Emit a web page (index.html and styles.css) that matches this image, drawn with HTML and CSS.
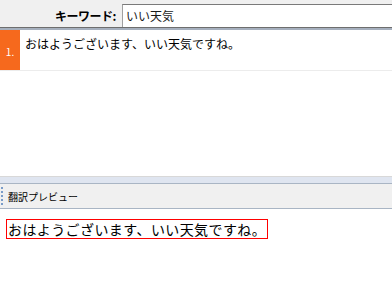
FILE: index.html
```html
<!DOCTYPE html>
<html lang="ja">
<head>
    <meta charset="UTF-8">
    <title>翻訳</title>
    <link rel="stylesheet" href="styles.css">
</head>
<body>
    <div class="topbar">
        <span class="kw-label">キーワード:</span>
        <div class="kw-input">いい天気</div>
    </div>
    <div class="sep"></div>

    <div class="list">
        <div class="row">
            <div class="num">1.</div>
            <div class="row-text">おはようございます、いい天気ですね。</div>
        </div>
    </div>

    <div class="splitter"></div>
    <div class="toolbar">
        <span class="grip"></span>
        <span class="toolbar-title">翻訳プレビュー</span>
    </div>

    <div class="preview">
        <div class="preview-box">おはようございます、いい天気ですね。</div>
    </div>
</body>
</html>
```

FILE: styles.css
```css
body {
    margin: 0;
    padding: 0;
    background: white;
    font-family: "Noto Sans CJK JP", "Noto Sans", sans-serif;
    color: #000;
    width: 392px;
    height: 294px;
    overflow: hidden;
}
.topbar {
    height: 27px;
    background: #f0f0f0;
    display: flex;
    align-items: flex-end;
}
.kw-label {
    font-size: 12px;
    font-weight: bold;
    margin-left: 55px;
    width: 67px;
    line-height: 22px;
    letter-spacing: -0.5px;
}
.kw-input {
    flex: 1;
    height: 22px;
    background: white;
    border-top: 1px solid #7a7a7a;
    border-left: 1px solid #a0a0a0;
    font-size: 12px;
    line-height: 21px;
    padding-left: 3px;
    color: #1a1a1a;
}
.sep {
    height: 2px;
    border-top: 1px solid #6e6e6e;
    background: #a6b0be;
}
.list {
    height: 146px;
}
.row {
    display: flex;
    height: 40px;
    border-bottom: 1px solid #ececec;
}
.num {
    width: 20px;
    background: #f6691d;
    color: white;
    font-size: 10px;
    display: flex;
    align-items: center;
    justify-content: center;
    padding-top: 2px;
}
.row-text {
    font-size: 12px;
    padding-left: 5px;
    line-height: 27px;
}
.splitter {
    height: 6px;
    border-top: 1px solid #d8d8d8;
    border-bottom: 1px solid #a9b5c4;
    background: #dfe5f0;
}
.toolbar {
    height: 24px;
    background: #f0f0f0;
    border-bottom: 1px solid #a9b5c4;
    display: flex;
    align-items: center;
}
.grip {
    width: 2px;
    height: 18px;
    margin-left: 1px;
    background: repeating-linear-gradient(to bottom, #7a9cc8 0, #7a9cc8 2px, transparent 2px, transparent 4px);
}
.toolbar-title {
    font-size: 10px;
    margin-left: 5px;
}
.preview {
    padding: 10px 0 0 6px;
}
.preview-box {
    width: fit-content;
    border: 1px solid #ff0000;
    font-size: 14px;
    line-height: 18px;
    letter-spacing: 0.4px;
    padding: 0 1px 0 1px;
}
```
